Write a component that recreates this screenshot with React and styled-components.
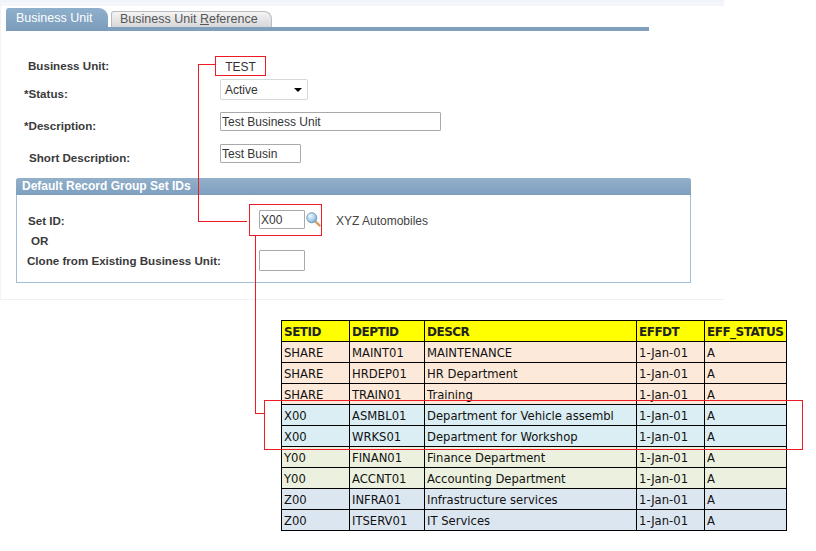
import React from 'react';
import styled, { createGlobalStyle } from 'styled-components';

const GlobalStyle = createGlobalStyle`
  html, body { margin: 0; padding: 0; background: #fff; }
  body { font-family: "Liberation Sans", Arial, sans-serif; font-size: 12px; color: #333; }
`;

const Page = styled.div`
  position: relative;
  width: 816px;
  height: 551px;
  overflow: hidden;
`;

const Panel = styled.div`
  box-sizing: border-box;
  width: 724px;
  height: 300px;
  padding-top: 6px;
  padding-left: 6px;
  background: #fff;
  border-top: 2px solid #f0f4f9;
  border-left: 1px solid #f0f4f9;
  border-bottom: 1px solid #eef2f7;
  box-shadow: inset 0 4px 0 #f3f6fa;
`;

const TabBar = styled.div`
  display: flex;
  align-items: flex-end;
  width: 643px;
  height: 19px;
  margin-left: -1px;
  border-bottom: 4px solid #7f9fbd;
`;

const ActiveTab = styled.div`
  box-sizing: border-box;
  width: 102px;
  height: 23px;
  margin-bottom: -4px;
  padding: 3px 0 0 10px;
  border-radius: 3px 9px 0 0;
  background: linear-gradient(#8fb0cc, #7a9cbb);
  color: #fff;
  font-size: 12.5px;
  line-height: 14px;
`;

const Tab = styled.div`
  box-sizing: border-box;
  width: 161px;
  height: 16px;
  margin-left: 3px;
  padding-left: 8px;
  border: 1px solid #b8bcc0;
  border-bottom: 0;
  border-radius: 3px 8px 0 0;
  background: linear-gradient(#f4f4f4, #d6d7d9);
  color: #555;
  font-size: 12.5px;
  line-height: 14px;
`;

const Form = styled.div`
  display: flex;
  flex-direction: column;
  padding-top: 27px;
`;

const Row = styled.div`
  display: flex;
  align-items: flex-start;
  height: ${p => p.$height}px;
`;

const Label = styled.div`
  box-sizing: border-box;
  width: ${p => p.$width || 213}px;
  padding-left: ${p => p.$indent}px;
  padding-top: ${p => p.$top || 0}px;
  font-size: 11.6px;
  font-weight: bold;
  line-height: 14px;
  color: #3a3a3a;
`;

const Select = styled.div`
  box-sizing: border-box;
  display: flex;
  align-items: center;
  justify-content: space-between;
  width: 88px;
  height: 21px;
  padding: 0 5px 0 4px;
  border: 1px solid #d5d8dc;
  border-radius: 2px;
  background: #fff;
  color: #333;
`;

const Caret = styled.span`
  width: 0;
  height: 0;
  border-left: 4px solid transparent;
  border-right: 4px solid transparent;
  border-top: 4px solid #000;
`;

const Input = styled.input`
  box-sizing: border-box;
  width: ${p => p.$width}px;
  height: ${p => p.$height || 19}px;
  padding: 0 1px;
  border: 1px solid #a9a9a9;
  border-radius: 1px;
  outline: none;
  background: #fff;
  font: 12px "Liberation Sans", Arial, sans-serif;
  color: #333;
`;

const GroupBox = styled.div`
  box-sizing: border-box;
  width: 675px;
  height: 105px;
  margin-left: 9px;
  margin-top: 8px;
  border: 1px solid #a3bfd9;
  border-top: 0;
  border-radius: 3px 3px 0 0;
`;

const GroupHeader = styled.div`
  box-sizing: border-box;
  height: 17px;
  margin: 0 -1px;
  padding-left: 6px;
  border-radius: 3px 3px 0 0;
  background: linear-gradient(#93b0ca, #7d9fbe);
  color: #fff;
  font-weight: bold;
  line-height: 16px;
`;

const GroupBody = styled.div`
  display: flex;
  flex-direction: column;
  padding-top: 15px;
`;

const LookupWrap = styled.div`
  display: flex;
  align-items: center;
`;

const LookupIcon = styled.svg`
  width: 15px;
  height: 15px;
  margin-left: 1px;
`;

const Descr = styled.div`
  margin-left: 15px;
  padding-top: 4px;
  color: #444;
`;

const Table = styled.table`
  margin: 20px 0 0 281px;
  width: 505px;
  table-layout: fixed;
  border-collapse: collapse;
  font-family: "DejaVu Sans", Verdana, sans-serif;
  font-size: 11.6px;
  color: #111;
`;

const HeadCell = styled.th`
  height: 19px;
  padding: 1px 0 0 2px;
  border: 1.5px solid #000;
  background: #ffff00;
  color: #222;
  font-size: 12px;
  font-weight: bold;
  letter-spacing: -0.5px;
  text-align: left;
  white-space: nowrap;
  overflow: hidden;
`;

const Cell = styled.td`
  height: 19px;
  padding: 1px 0 0 2px;
  border: 1.5px solid #000;
  background: ${p => p.$bg};
  white-space: nowrap;
  overflow: hidden;
`;

const RedBox = styled.div`
  position: absolute;
  box-sizing: border-box;
  left: ${p => p.$x}px;
  top: ${p => p.$y}px;
  width: ${p => p.$w}px;
  height: ${p => p.$h}px;
  padding-top: ${p => p.$pad || 0}px;
  border: 1px solid #ed1c24;
  display: flex;
  align-items: center;
  justify-content: center;
`;

const RedLine = styled.div`
  position: absolute;
  left: ${p => p.$x}px;
  top: ${p => p.$y}px;
  width: ${p => p.$w || 1}px;
  height: ${p => p.$h || 1}px;
  background: #ed1c24;
`;

const TestValue = styled.span`
  color: #333;
`;

const columns = ['SETID', 'DEPTID', 'DESCR', 'EFFDT', 'EFF_STATUS'];
const widths = [68, 75, 212, 68, 82];

const rows = [
  ['SHARE', 'MAINT01', 'MAINTENANCE', '#fde9d9'],
  ['SHARE', 'HRDEP01', 'HR Department', '#fde9d9'],
  ['SHARE', 'TRAIN01', 'Training', '#fde9d9'],
  ['X00', 'ASMBL01', 'Department for Vehicle assembl', '#daeef3'],
  ['X00', 'WRKS01', 'Department for Workshop', '#daeef3'],
  ['Y00', 'FINAN01', 'Finance Department', '#ebf1de'],
  ['Y00', 'ACCNT01', 'Accounting Department', '#ebf1de'],
  ['Z00', 'INFRA01', 'Infrastructure services', '#dce6f1'],
  ['Z00', 'ITSERV01', 'IT Services', '#dce6f1'],
];

const Magnifier = () => (
  <LookupIcon viewBox="0 0 15 15">
    <defs>
      <radialGradient id="glass" cx="0.35" cy="0.3" r="0.8">
        <stop offset="0" stopColor="#eef7fd" />
        <stop offset="0.6" stopColor="#a9d0ea" />
        <stop offset="1" stopColor="#5d9ccb" />
      </radialGradient>
    </defs>
    <path d="M9.5 9.5 L13.5 13.5" stroke="#d99a5f" strokeWidth="2.4" strokeLinecap="round" />
    <circle cx="5.8" cy="5.8" r="5" fill="url(#glass)" stroke="#6f9cba" strokeWidth="1" />
  </LookupIcon>
);

export default function App() {
  return (
    <Page>
      <GlobalStyle />
      <Panel>
        <TabBar>
          <ActiveTab>Business Unit</ActiveTab>
          <Tab>Business Unit <u>R</u>eference</Tab>
        </TabBar>
        <Form>
          <Row $height={21}>
            <Label $indent={21} $top={1}>Business Unit:</Label>
          </Row>
          <Row $height={33}>
            <Label $indent={17} $top={8}>*Status:</Label>
            <Select>Active<Caret /></Select>
          </Row>
          <Row $height={32}>
            <Label $indent={17} $top={7}>*Description:</Label>
            <Input $width={221} defaultValue="Test Business Unit" readOnly />
          </Row>
          <Row $height={26}>
            <Label $indent={22} $top={7}>Short Description:</Label>
            <Input $width={81} defaultValue="Test Busin" readOnly />
          </Row>
        </Form>
        <GroupBox>
          <GroupHeader>Default Record Group Set IDs</GroupHeader>
          <GroupBody>
            <Row $height={20}>
              <Label $indent={11} $width={242} $top={4}>Set ID:</Label>
              <LookupWrap>
                <Input $width={46} defaultValue="X00" readOnly />
                <Magnifier />
              </LookupWrap>
              <Descr>XYZ Automobiles</Descr>
            </Row>
            <Row $height={20}>
              <Label $indent={14} $top={4}>OR</Label>
            </Row>
            <Row $height={21}>
              <Label $indent={10} $width={242} $top={4}>Clone from Existing Business Unit:</Label>
              <Input $width={46} $height={21} readOnly />
            </Row>
          </GroupBody>
        </GroupBox>
      </Panel>

      <Table>
        <colgroup>
          {widths.map((w, i) => <col key={i} style={{ width: w }} />)}
        </colgroup>
        <thead>
          <tr>{columns.map(c => <HeadCell key={c}>{c}</HeadCell>)}</tr>
        </thead>
        <tbody>
          {rows.map(r => (
            <tr key={r[1]}>
              <Cell $bg={r[3]}>{r[0]}</Cell>
              <Cell $bg={r[3]}>{r[1]}</Cell>
              <Cell $bg={r[3]}>{r[2]}</Cell>
              <Cell $bg={r[3]}>1-Jan-01</Cell>
              <Cell $bg={r[3]}>A</Cell>
            </tr>
          ))}
        </tbody>
      </Table>

      <RedBox $x={215} $y={56} $w={51} $h={20} $pad={2}><TestValue>TEST</TestValue></RedBox>
      <RedLine $x={198} $y={64} $w={17} />
      <RedLine $x={198} $y={64} $h={158} />
      <RedLine $x={198} $y={221} $w={49} />
      <RedBox $x={249} $y={204} $w={73} $h={32} />
      <RedLine $x={255} $y={236} $h={178} />
      <RedLine $x={255} $y={413} $w={9} />
      <RedBox $x={264} $y={400} $w={539} $h={50} />
    </Page>
  );
}
